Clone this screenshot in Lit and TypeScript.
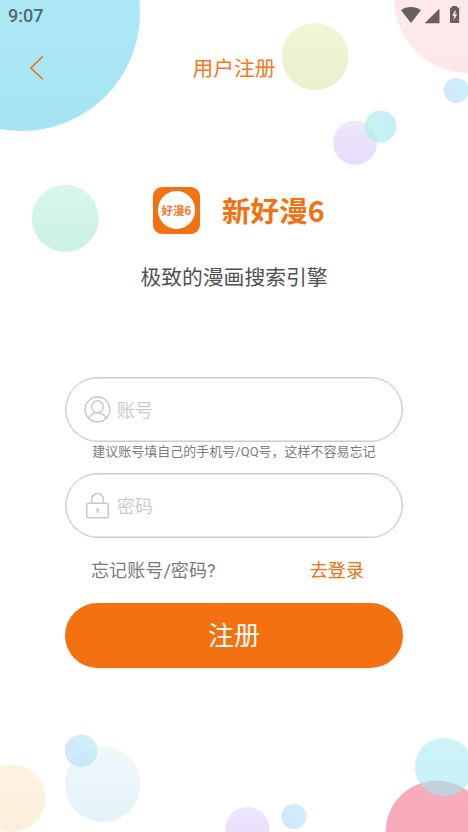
import { LitElement, html, svg, css } from "lit";
import { customElement } from "lit/decorators.js";

interface Bubble {
  x: number;
  y: number;
  r: number;
  fill: string;
}

const gradients = [
  { id: "sky", from: "#b0ecf6", to: "#a7e4f3" },
  { id: "rose", from: "#fcecef", to: "#fee7e9" },
  { id: "lime", from: "#f2f6d6", to: "#e9f0cc" },
  { id: "lilac", from: "#efe7fc", to: "#e5dcfc" },
  { id: "mint", from: "#d8f7ec", to: "#caf1e1" },
  { id: "cream", from: "#fdf3e0", to: "#fcefdb" },
  { id: "ice", from: "#eff8fa", to: "#e5f2fb" },
  { id: "coral", from: "#f7acba", to: "#f6a9be" },
];

const bubbles: Bubble[] = [
  { x: 22, y: 13, r: 118, fill: "sky" },
  { x: 468, y: -1, r: 74, fill: "rose" },
  { x: 315, y: 56.5, r: 33.5, fill: "lime" },
  { x: 456.3, y: 90.5, r: 12.6, fill: "blue" },
  { x: 355, y: 142.8, r: 22, fill: "lilac" },
  { x: 380.5, y: 126.5, r: 16, fill: "teal" },
  { x: 65.3, y: 218.3, r: 33.5, fill: "mint" },
  { x: 12, y: 798.3, r: 33.5, fill: "cream" },
  { x: 102.6, y: 784.3, r: 37.7, fill: "ice" },
  { x: 81.2, y: 750.8, r: 16.3, fill: "blue" },
  { x: 247.3, y: 828.8, r: 22, fill: "lilac" },
  { x: 294, y: 816.5, r: 12.6, fill: "blue" },
  { x: 437, y: 832.2, r: 51.5, fill: "coral" },
  { x: 444, y: 767, r: 29.2, fill: "aqua" },
];

@customElement("bubble-backdrop")
export class BubbleBackdrop extends LitElement {
  static styles = css`
    :host { display: block; }
    svg { display: block; }
  `;

  render() {
    return html`<svg width="468" height="832" viewBox="0 0 468 832" aria-hidden="true">
      <defs>
        ${gradients.map(
          (g) => svg`<linearGradient id=${g.id} x1="0" y1="0" x2="0" y2="1">
            <stop offset="0" stop-color=${g.from} /><stop offset="1" stop-color=${g.to} />
          </linearGradient>`
        )}
        <linearGradient id="blue" x1="0" y1="0.65" x2="1" y2="0.35">
          <stop offset="0" stop-color="#bdd6fb" stop-opacity="0.65" />
          <stop offset="1" stop-color="#aeebf9" stop-opacity="0.65" />
        </linearGradient>
        <linearGradient id="teal" x1="0" y1="0.65" x2="1" y2="0.35">
          <stop offset="0" stop-color="#b3f0e6" stop-opacity="0.7" />
          <stop offset="1" stop-color="#a8e8f6" stop-opacity="0.7" />
        </linearGradient>
        <linearGradient id="aqua" x1="0" y1="0" x2="0" y2="1">
          <stop offset="0" stop-color="#afecf4" stop-opacity="0.6" />
          <stop offset="1" stop-color="#a2e8f4" stop-opacity="0.6" />
        </linearGradient>
      </defs>
      ${bubbles.map(
        (b) => svg`<circle cx=${b.x} cy=${b.y} r=${b.r} fill="url(#${b.fill})" />`
      )}
    </svg>`;
  }
}

@customElement("app-root")
export class AppRoot extends LitElement {
  static styles = css`
    :host {
      display: block;
      position: relative;
      width: 468px;
      height: 832px;
      overflow: hidden;
      background: #fff;
      font-family: Roboto, "Noto Sans CJK SC", sans-serif;
    }
    * { box-sizing: border-box; }
    svg { display: block; flex: none; }
    bubble-backdrop { position: absolute; inset: 0; }
    .screen {
      position: relative;
      height: 100%;
      display: flex;
      flex-direction: column;
    }
    .status {
      height: 32px;
      display: flex;
      align-items: center;
      justify-content: space-between;
      padding: 0 7px 0 8px;
    }
    .time {
      font-size: 18px;
      font-weight: 500;
      line-height: 32px;
      color: #4f6a6e;
    }
    .header {
      height: 72px;
      display: grid;
      grid-template-columns: 72px 1fr 72px;
      align-items: center;
    }
    .back {
      padding: 0 0 0 28px;
      border: 0;
      background: none;
      justify-self: start;
    }
    .title {
      margin: 0;
      padding-top: 2px;
      text-align: center;
      font-size: 20.8px;
      font-weight: 400;
      line-height: 30px;
      color: #f47920;
    }
    .brand {
      margin-top: 82px;
      height: 48px;
      padding-left: 153px;
      display: flex;
      align-items: center;
      gap: 22px;
    }
    .logo {
      width: 47px;
      height: 47px;
      border-radius: 9px;
      background: #f37110;
      display: grid;
      place-items: center;
    }
    .disc {
      width: 37.5px;
      height: 37.5px;
      border-radius: 50%;
      background: #fff;
      display: grid;
      place-items: center;
      font: 700 11.4px/16px "Noto Sans CJK SC", sans-serif;
      letter-spacing: 0.2px;
      color: #f5762a;
      white-space: nowrap;
    }
    .name {
      font: 700 28.6px/40px "Noto Sans CJK SC", sans-serif;
      color: #f37110;
    }
    .slogan {
      margin: 29px 0 0;
      text-align: center;
      font-size: 20.8px;
      line-height: 30px;
      color: #505050;
    }
    .form {
      width: 338px;
      margin: 84px auto 0;
      display: flex;
      flex-direction: column;
    }
    .field {
      height: 65px;
      border: 1px solid #ccc;
      box-shadow: inset 0 0 0 0.5px #ccc;
      border-radius: 33px;
      background: #fff;
      display: flex;
      align-items: center;
      gap: 6px;
      padding: 0 24px 0 18px;
    }
    .input {
      flex: 1;
      min-width: 0;
      height: 37px;
      padding: 1px 0 0;
      border: 0;
      outline: 0;
      background: none;
      font: 400 18px/36px Roboto, "Noto Sans CJK SC", sans-serif;
      color: #484848;
    }
    .input::placeholder { color: #ccc; opacity: 1; }
    .hint {
      height: 31px;
      text-align: center;
      font-size: 13px;
      line-height: 19px;
      color: #7c7c7c;
      white-space: nowrap;
    }
    .links {
      display: flex;
      justify-content: space-between;
      padding: 0 39px 0 26px;
      margin-top: 19px;
      height: 28px;
      font-size: 18.1px;
      line-height: 28px;
      color: #7a7a7a;
    }
    .login { color: #f37110; }
    .submit {
      margin-top: 18px;
      height: 65px;
      padding: 1px 0 0;
      border: 0;
      border-radius: 33px;
      background: #f37110;
      color: #fff;
      font: 400 26px/38px Roboto, "Noto Sans CJK SC", sans-serif;
    }
  `;

  render() {
    return html`
      <bubble-backdrop></bubble-backdrop>
      <div class="screen">
        <div class="status">
          <span class="time">9:07</span>
          <svg width="60" height="20" viewBox="401 6 60 20" fill="#685f60">
            <path d="M401 10.3C406.5 6 415.5 6 421 10.3L411 23Z" />
            <path d="M439.5 8.5V23.3H424.7Z" />
            <path d="M450 7.6h2V6h5v1.6h2.2V23H450Z" />
            <path d="M454.8 10.8 452.4 15.8H454.3L453.3 20.7 457.2 14.2H454.9L455.9 10.8Z" fill="#fdebed" />
          </svg>
        </div>
        <header class="header">
          <button class="back" aria-label="返回">
            <svg width="18" height="26" viewBox="0 0 18 26" fill="none" stroke="#f37110" stroke-width="1.5">
              <path d="M14.8 1.4 2.8 12.9 14.8 24.2" />
            </svg>
          </button>
          <h1 class="title">用户注册</h1>
        </header>
        <div class="brand">
          <div class="logo"><div class="disc">好漫6</div></div>
          <span class="name">新好漫6</span>
        </div>
        <p class="slogan">极致的漫画搜索引擎</p>
        <div class="form">
          <label class="field">
            <svg width="27" height="27" viewBox="0 0 27 27" fill="none" stroke="#c8c8c8" stroke-width="1.4">
              <circle cx="13.5" cy="13.4" r="12.4" />
              <circle cx="13.4" cy="10.7" r="5.9" />
              <path d="M4.6 22C6.4 18.7 9.6 16.7 13.4 16.7S20.5 18.7 22.3 22" />
            </svg>
            <input class="input" placeholder="账号" />
          </label>
          <div class="hint">建议账号填自己的手机号/QQ号，这样不容易忘记</div>
          <label class="field">
            <svg width="27" height="28" viewBox="0 0 27 28" fill="none" stroke="#c8c8c8" stroke-width="1.5">
              <rect x="2.7" y="11.3" width="21.6" height="14.5" rx="2" />
              <path d="M7.7 11V7.2a5.8 5.8 0 0 1 11.6 0V11" />
              <path d="M11.8 16.6h3.4l-1.1 4.6h-1Z" fill="#c8c8c8" stroke="none" />
            </svg>
            <input class="input" type="password" placeholder="密码" />
          </label>
          <div class="links">
            <span>忘记账号/密码?</span>
            <span class="login">去登录</span>
          </div>
          <button class="submit">注册</button>
        </div>
      </div>
    `;
  }
}
